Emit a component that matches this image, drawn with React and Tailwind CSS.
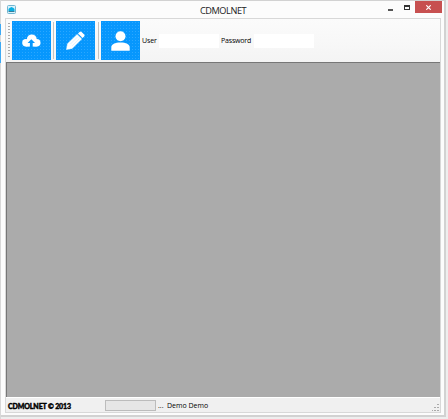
import React from "react";

const dots = "bg-[#0797fd] bg-[radial-gradient(circle,#2ba7ff_0.6px,transparent_0.9px)] bg-[length:3px_3px]";

function ToolButton({ children, className = "" }) {
  return (
    <button className={`flex h-[39px] w-[39px] shrink-0 items-center justify-center ${dots} ${className}`}>
      {children}
    </button>
  );
}

function Separator({ className }) {
  return <div className={`mt-px h-[37px] w-px shrink-0 bg-[#c3c3c3] ${className}`} />;
}

function Label({ children, className = "" }) {
  return (
    <span className={`shrink-0 whitespace-nowrap font-['Open_Sans',sans-serif] text-[7px] leading-[12px] font-medium text-black ${className}`}>
      {children}
    </span>
  );
}

export default function App() {
  return (
    <div className="flex h-[419px] w-[448px] overflow-hidden bg-[#eeeeee]">
      <div className="h-[419px] w-px shrink-0 bg-[#d8d8d8]">
        <div className="h-[24px]" />
        <div className="h-[11px] bg-[#3da9f4]" />
        <div className="mt-[7px] h-[21px] bg-[#3da9f4]" />
      </div>
      <div className="flex h-[417px] w-[445px] shrink-0 flex-col border-t border-r-2 border-b-2 border-[#d2d2d2] bg-[#fcfcfc]">
        <header className="flex h-[17px] shrink-0 items-start">
          <svg width="9" height="9" viewBox="0 0 9 9" className="mt-[4px] ml-[6px] shrink-0">
            <rect x=".5" y=".5" width="8" height="8" rx="1" fill="#d9f2fb" stroke="#72b6d1" />
            <path d="M1.500 6V4l1-1 2-1 2 1 1 1v2z" fill="#08aee2" />
            <path d="M1.500 6.500h6" stroke="#347e9b" />
          </svg>
          <h1 className="mt-[2px] ml-[184px] w-[48px] shrink-0 whitespace-nowrap font-['Open_Sans',sans-serif] text-[9.2px] leading-[15px] tracking-[-0.45px] text-[#222]">CDMOLNET</h1>
          <div className="mt-[8px] ml-[140px] h-[2px] w-[5px] shrink-0 bg-[#555]" />
          <div className="mt-[4px] ml-[11px] h-[5px] w-[6px] shrink-0 border border-t-2 border-[#333]" />
          <div className="ml-[5px] flex h-[12px] w-[27px] shrink-0 items-center justify-center bg-[#c75050]">
            <svg width="5" height="5" viewBox="0 0 5 5">
              <path d="M.3.3l4.400 4.400M4.700.3L.3 4.700" stroke="#fff" strokeWidth="1.15" />
            </svg>
          </div>
        </header>

        <main className="ml-[4px] flex h-[395px] w-[436px] shrink-0 flex-col border border-[#d8d8d8] bg-[#f0f0f0]">
          <div className="flex h-[43px] shrink-0 items-start bg-gradient-to-b from-[#fbfbfb] via-[#f8f8f8] to-[#f4f4f4] pt-[2px]">
            <div className="mt-px ml-[2px] h-[36px] w-[2px] shrink-0 bg-[radial-gradient(circle,#aaa_0.7px,transparent_1px)] bg-[length:2px_3px]" />
            <ToolButton className="ml-[2px]">
              <svg width="19" height="14" viewBox="0 0 19 14" fill="#fff">
                <circle cx="3.9" cy="8.8" r="3.7" />
                <circle cx="9.8" cy="5.3" r="4.9" />
                <circle cx="14.7" cy="8.8" r="3.8" />
                <path d="M3.900 7h10.800v5.600H3.900z" />
                <path d="M9.300 5.200l3.700 3.900h-2.300v4.100H7.900V9.100H5.600z" fill="#0797fd" />
              </svg>
            </ToolButton>
            <Separator className="ml-[2px]" />
            <ToolButton className="ml-[2px]">
              <svg width="19" height="19" viewBox="0 0 19 19">
                <path d="M.5 18.500l1-5.700 9.600-9.400 4.600 4.500-9.500 9.500z" fill="#fff" stroke="#fff" strokeWidth=".5" />
                <path d="M12 2.500L13.600.9q1-.9 2 0L18.100 3.400q1 1 0 2L16.600 7z" fill="#fff" />
                <path d="M4.300 13.100l7.200-7.200M6.100 14.900l7.300-7.300" stroke="#b5dfff" strokeWidth=".4" />
              </svg>
            </ToolButton>
            <Separator className="ml-[3px]" />
            <ToolButton className="ml-[2px]">
              <svg width="19" height="20" viewBox="0 0 19 20" fill="#fff">
                <circle cx="9.5" cy="5.2" r="5" />
                <path d="M.3 19.800v-3.300c0-3.300 3.700-5 9.200-5s9.200 1.700 9.200 5v3.300z" />
              </svg>
            </ToolButton>
            <Label className="mt-[14px] ml-[2px] w-[15px] tracking-[-0.1px]">User</Label>
            <input aria-label="User" className="mt-[13px] ml-[2px] h-[14px] w-[60px] shrink-0 bg-white outline-none" />
            <Label className="mt-[14px] ml-[2px] w-[31px] tracking-[-0.18px]">Password</Label>
            <input aria-label="Password" type="password" className="mt-[13px] ml-[2px] h-[14px] w-[60px] shrink-0 bg-white outline-none" />
          </div>
          <section className="h-[335px] w-[434px] shrink-0 border-t border-l border-[#777] bg-[#ababab]" />
          <footer className="flex h-[15px] shrink-0 items-start border-t border-white bg-[#f0f0f0]">
            <span className="mt-[2px] ml-[2px] w-[65px] shrink-0 whitespace-nowrap font-['Lato',sans-serif] text-[7px] leading-[12px] font-black tracking-[-0.12px] text-black [-webkit-text-stroke:0.4px_black]">CDMOLNET © 2013</span>
            <div className="mt-[2px] ml-[32px] h-[11px] w-[51px] shrink-0 border border-[#bcbcbc] bg-[#e6e6e6]" />
            <Label className="mt-[2px] ml-[2px] w-[6px]">...</Label>
            <Label className="mt-[2px] ml-[3px] w-[42px]">Demo Demo</Label>
            <svg width="8" height="8" viewBox="0 0 8 8" fill="#aaa" className="mt-[6px] ml-auto shrink-0">
              <path d="M5 0h2v1H5zM2 3h2v1H2zM5 3h2v1H5zM0 6h1v1H0zM2 6h2v1H2zM5 6h2v1H5z" />
            </svg>
          </footer>
        </main>
      </div>
    </div>
  );
}
